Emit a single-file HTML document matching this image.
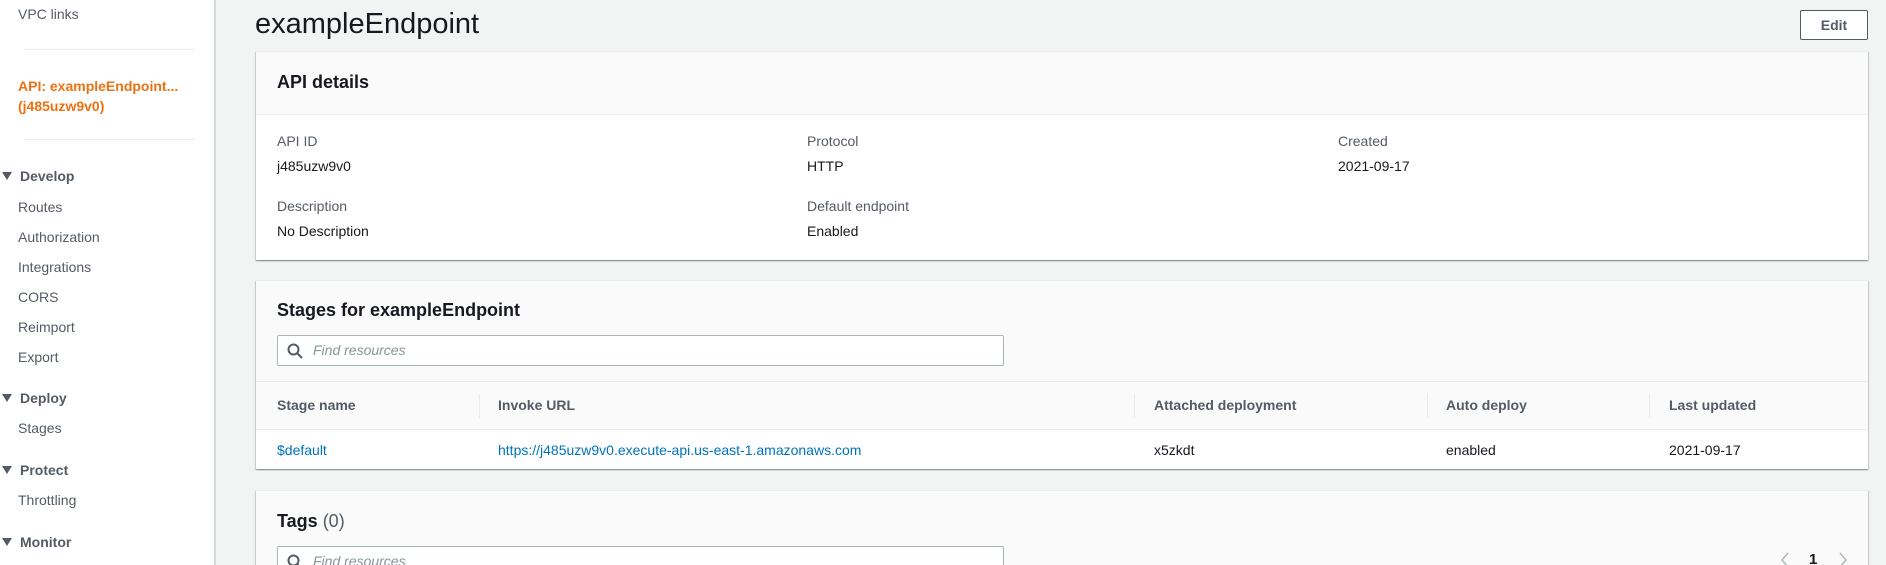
<!DOCTYPE html>
<html style="overflow:hidden;height:565px"><head><style>
*{margin:0;padding:0;box-sizing:border-box}
body{width:1886px;height:565px;overflow:hidden;background:#f2f3f3;font-family:"Liberation Sans",sans-serif;color:#16191f;font-size:14px;position:relative}
.abs{position:absolute;white-space:nowrap}
#side{position:absolute;left:0;top:0;width:216px;height:565px;background:#fff;border-right:2px solid #d5dbdb}
.nav{position:absolute;left:18px;color:#545b64;font-size:14px;line-height:18px}
.sec{position:absolute;left:2px;color:#545b64;font-weight:bold;font-size:14px;line-height:18px}
.sec:before{content:"";display:inline-block;border-left:5px solid transparent;border-right:5px solid transparent;border-top:8px solid #545b64;margin-right:8px;vertical-align:1px}
.hr{position:absolute;left:24px;width:171px;height:1px;background:#eaeded}
.card{position:absolute;left:256px;width:1612px;background:#fff;box-shadow:0 1px 1px 0 rgba(0,28,36,.3),1px 1px 1px 0 rgba(0,28,36,.15),-1px 1px 1px 0 rgba(0,28,36,.15);border-top:1px solid #eaeded}
.hd{background:#fafafa;border-bottom:1px solid #eaeded;position:relative}
.h2{font-size:18px;font-weight:bold;position:absolute;left:21px}
.lab{color:#545b64}
.search{position:absolute;left:21px;width:727px;height:31px;border:1px solid #aab7b8;background:#fff;border-radius:2px}
.search span{position:absolute;left:35px;top:6px;color:#879596;font-style:italic;font-size:14px}
.search svg{position:absolute;left:9px;top:7px}
.th{position:absolute;top:24px;font-weight:bold;color:#545b64}
.dv{position:absolute;top:12px;width:1px;height:24px;background:#eaeded}
.td{position:absolute;top:12px}
a{color:#0073bb;text-decoration:none}
</style></head><body>
<div id="side">
<div class="nav" style="top:5px">VPC links</div>
<div class="hr" style="top:49px"></div>
<div class="nav" style="top:77px;color:#ec7211;font-weight:bold">API: exampleEndpoint...</div>
<div class="nav" style="top:97px;color:#ec7211;font-weight:bold">(j485uzw9v0)</div>
<div class="hr" style="top:139px"></div>
<div class="sec" style="top:167px">Develop</div>
<div class="nav" style="top:198px">Routes</div>
<div class="nav" style="top:228px">Authorization</div>
<div class="nav" style="top:258px">Integrations</div>
<div class="nav" style="top:288px">CORS</div>
<div class="nav" style="top:318px">Reimport</div>
<div class="nav" style="top:348px">Export</div>
<div class="sec" style="top:389px">Deploy</div>
<div class="nav" style="top:419px">Stages</div>
<div class="sec" style="top:461px">Protect</div>
<div class="nav" style="top:491px">Throttling</div>
<div class="sec" style="top:533px">Monitor</div>
</div>

<div class="abs" style="left:255px;top:7px;font-size:29px;line-height:34px">exampleEndpoint</div>
<div class="abs" style="left:1800px;top:10px;width:68px;height:30px;border:1px solid #545b64;background:#fff;text-align:center;line-height:28px;font-weight:bold;color:#545b64;border-radius:2px">Edit</div>

<div class="card" style="top:51px;height:209px">
 <div class="hd" style="height:63px"><div class="h2" style="top:20px">API details</div></div>
 <div class="abs lab" style="left:21px;top:81px">API ID</div>
 <div class="abs" style="left:21px;top:106px">j485uzw9v0</div>
 <div class="abs lab" style="left:21px;top:146px">Description</div>
 <div class="abs" style="left:21px;top:171px">No Description</div>
 <div class="abs lab" style="left:551px;top:81px">Protocol</div>
 <div class="abs" style="left:551px;top:106px">HTTP</div>
 <div class="abs lab" style="left:551px;top:146px">Default endpoint</div>
 <div class="abs" style="left:551px;top:171px">Enabled</div>
 <div class="abs lab" style="left:1082px;top:81px">Created</div>
 <div class="abs" style="left:1082px;top:106px">2021-09-17</div>
</div>

<div class="card" style="top:280px;height:189px">
 <div class="hd" style="height:149px">
  <div class="h2" style="top:19px">Stages for exampleEndpoint</div>
  <div class="search" style="top:54px"><svg width="16" height="16" viewBox="0 0 16 16"><circle cx="6.5" cy="6.5" r="5" fill="none" stroke="#545b64" stroke-width="2"/><path d="M10.5 10.5L15 15" stroke="#545b64" stroke-width="2"/></svg><span>Find resources</span></div>
  <div style="position:absolute;left:0;right:0;top:100px;height:1px;background:#eaeded"></div>
  <div style="position:absolute;left:0;right:0;top:101px;height:48px">
   <div class="th" style="left:21px;top:15px">Stage name</div>
   <div class="dv" style="left:223px"></div><div class="th" style="left:242px;top:15px">Invoke URL</div>
   <div class="dv" style="left:878px"></div><div class="th" style="left:898px;top:15px">Attached deployment</div>
   <div class="dv" style="left:1171px"></div><div class="th" style="left:1190px;top:15px">Auto deploy</div>
   <div class="dv" style="left:1393px"></div><div class="th" style="left:1413px;top:15px">Last updated</div>
  </div>
 </div>
 <div style="position:relative;height:40px">
  <div class="td" style="left:21px"><a>$default</a></div>
  <div class="td" style="left:242px"><a>https://j485uzw9v0.execute-api.us-east-1.amazonaws.com</a></div>
  <div class="td" style="left:898px">x5zkdt</div>
  <div class="td" style="left:1190px">enabled</div>
  <div class="td" style="left:1413px">2021-09-17</div>
 </div>
</div>

<div class="card" style="top:490px;height:75px;background:#fafafa;overflow:hidden">
 <div class="h2" style="top:20px">Tags <span style="font-weight:normal;color:#545b64">(0)</span></div>
 <div class="search" style="top:55px"><svg width="16" height="16" viewBox="0 0 16 16"><circle cx="6.5" cy="6.5" r="5" fill="none" stroke="#545b64" stroke-width="2"/><path d="M10.5 10.5L15 15" stroke="#545b64" stroke-width="2"/></svg><span>Find resources</span></div>
 <svg class="abs" style="left:1524px;top:61px" width="10" height="16" viewBox="0 0 10 16"><path d="M8 1L2 8l6 7" fill="none" stroke="#aab7b8" stroke-width="1.5"/></svg>
 <div class="abs" style="left:1553px;top:60px;font-weight:bold;font-size:15px">1</div>
 <svg class="abs" style="left:1582px;top:61px" width="10" height="16" viewBox="0 0 10 16"><path d="M2 1l6 7-6 7" fill="none" stroke="#aab7b8" stroke-width="1.5"/></svg>
</div>
</body></html>
